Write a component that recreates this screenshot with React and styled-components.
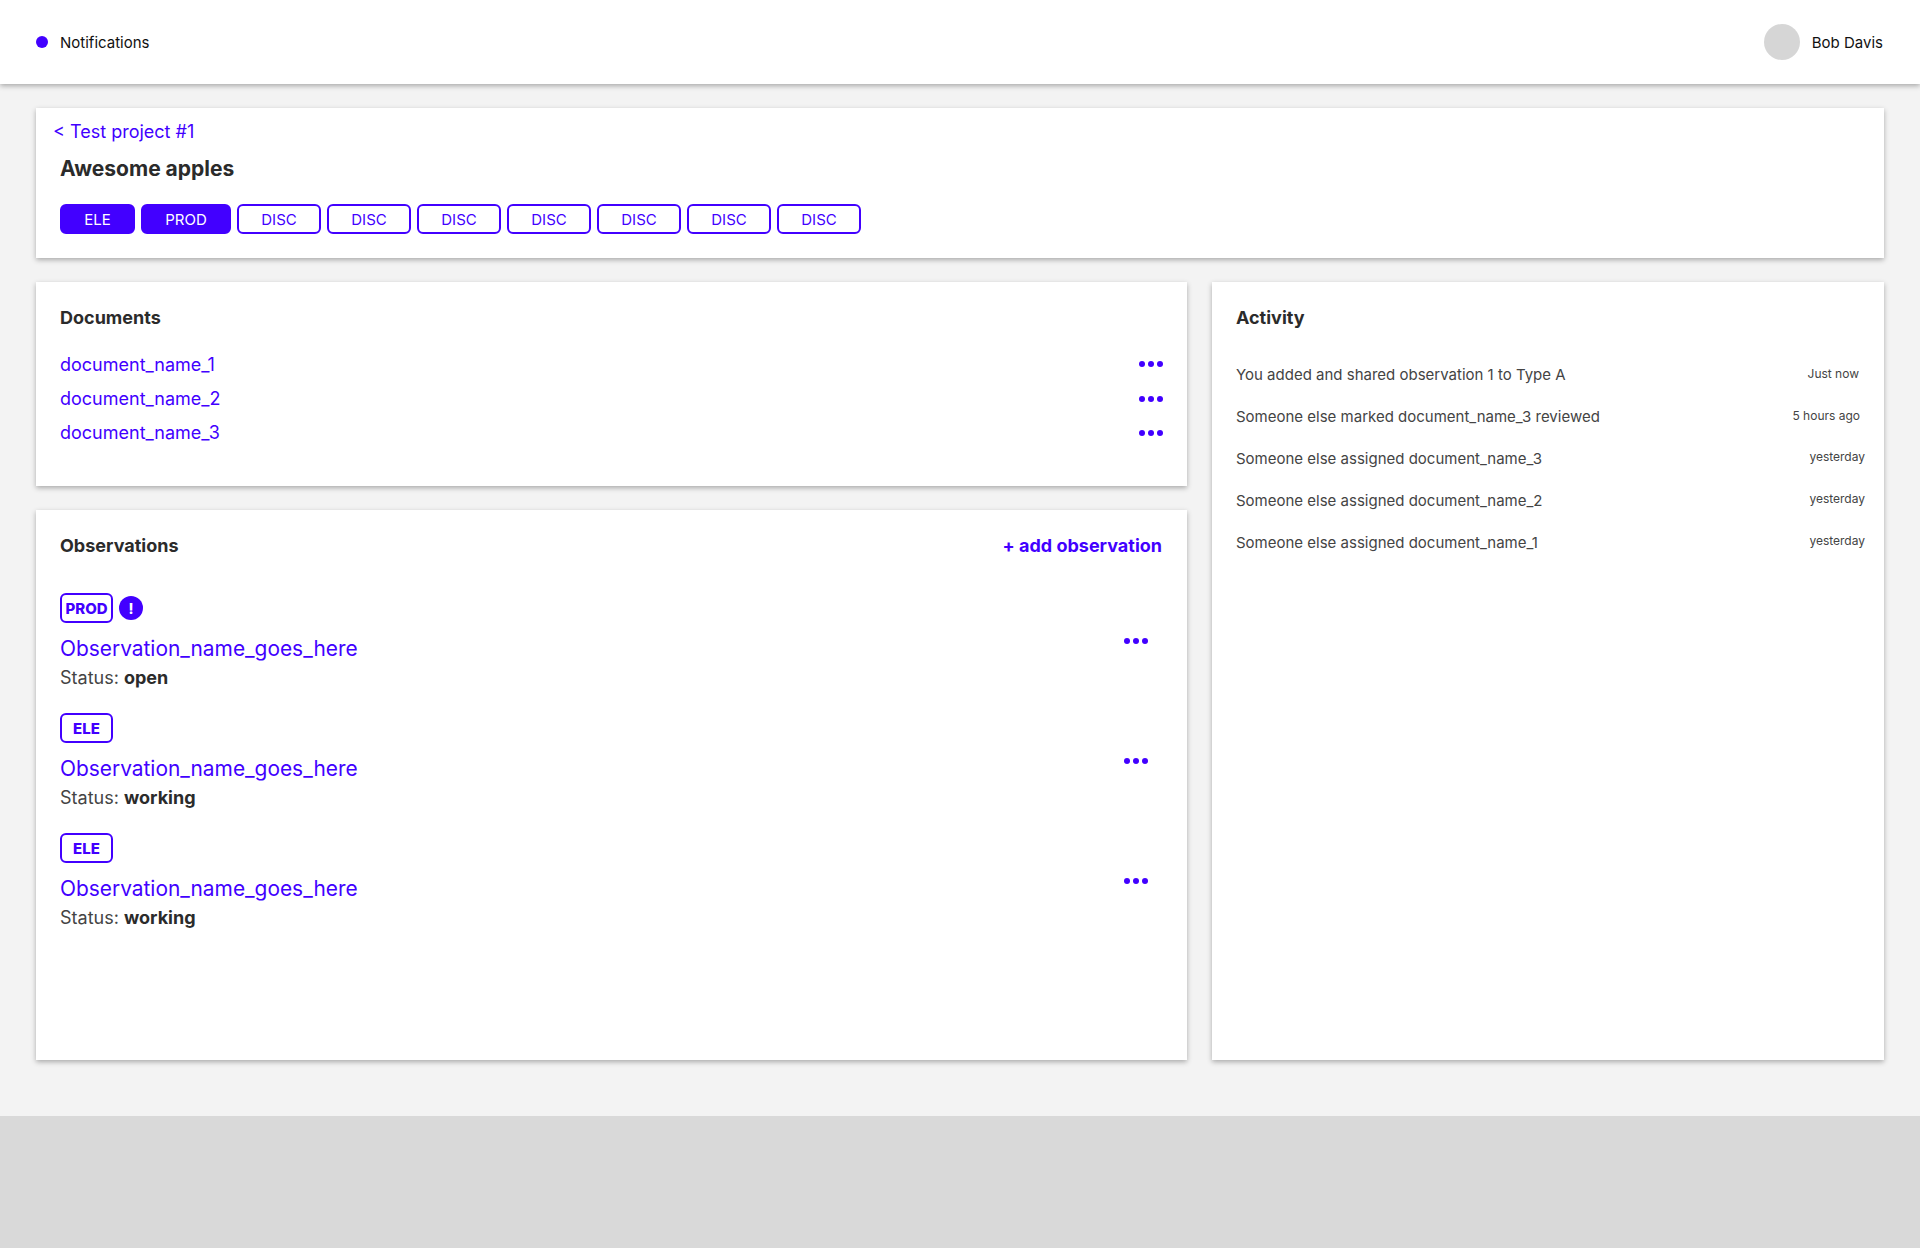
import React from "react"
import styled, { createGlobalStyle } from "styled-components"

const purple = "#4200ff"
const ink = "#2b2b2b"

const disciplines = ["DISC", "DISC", "DISC", "DISC", "DISC", "DISC", "DISC"]
const documents = ["document_name_1", "document_name_2", "document_name_3"]
const observations = [
  { tag: "PROD", status: "open", alert: true },
  { tag: "ELE", status: "working" },
  { tag: "ELE", status: "working" },
]
const activity = [
  { text: "You added and shared observation 1 to Type A", time: "Just now", inset: 6, lift: 2 },
  { text: "Someone else marked document_name_3 reviewed", time: "5 hours ago", inset: 5, lift: 2 },
  { text: "Someone else assigned document_name_3", time: "yesterday", inset: 0, lift: 4 },
  { text: "Someone else assigned document_name_2", time: "yesterday", inset: 0, lift: 4 },
  { text: "Someone else assigned document_name_1", time: "yesterday", inset: 0, lift: 4 },
]

const MoreDots = () => (
  <Dots>
    <Dot />
    <Dot />
    <Dot />
  </Dots>
)

const App = () => {
  return (
    <Page>
      <GlobalStyle />
      <Header>
        <Notifications>
          <NotificationDot />
          Notifications
        </Notifications>
        <User>
          <Avatar />
          Bob Davis
        </User>
      </Header>
      <Main>
        <ProjectCard>
          <BackLink>&lt; Test project #1</BackLink>
          <ProjectTitle>Awesome apples</ProjectTitle>
          <Tabs>
            <Tab $active $width={75}>ELE</Tab>
            <Tab $active $width={90}>PROD</Tab>
            {disciplines.map((name, i) => (
              <Tab key={i} $width={84}>{name}</Tab>
            ))}
          </Tabs>
        </ProjectCard>
        <Columns>
          <LeftColumn>
            <Card>
              <CardTitle>Documents</CardTitle>
              <DocumentList>
                {documents.map((name) => (
                  <DocumentRow key={name}>
                    <DocumentLink>{name}</DocumentLink>
                    <MoreDots />
                  </DocumentRow>
                ))}
              </DocumentList>
            </Card>
            <Card>
              <CardHeader>
                <CardTitle>Observations</CardTitle>
                <AddLink>+ add observation</AddLink>
              </CardHeader>
              <ObservationList>
                {observations.map((item, i) => (
                  <Observation key={i}>
                    <div>
                      <TagRow>
                        <Tag>{item.tag}</Tag>
                        {item.alert && <Alert>!</Alert>}
                      </TagRow>
                      <ObservationName>Observation_name_goes_here</ObservationName>
                      <Status>
                        Status: <strong>{item.status}</strong>
                      </Status>
                    </div>
                    <ObservationMenu>
                      <MoreDots />
                    </ObservationMenu>
                  </Observation>
                ))}
              </ObservationList>
            </Card>
          </LeftColumn>
          <Card>
            <CardTitle>Activity</CardTitle>
            <ActivityList>
              {activity.map((item, i) => (
                <ActivityRow key={i}>
                  <span>{item.text}</span>
                  <ActivityTime $inset={item.inset} $lift={item.lift}>{item.time}</ActivityTime>
                </ActivityRow>
              ))}
            </ActivityList>
          </Card>
        </Columns>
      </Main>
      <Footer />
    </Page>
  )
}

export default App

const GlobalStyle = createGlobalStyle`
  body {
    margin: 0;
    font-family: Inter, "Liberation Sans", sans-serif;
    color: ${ink};
  }
`

const Page = styled.div`
  min-height: 1248px;
  display: flex;
  flex-direction: column;
  background: #f3f3f3;
`

const Header = styled.header`
  position: relative;
  height: 84px;
  padding: 0 37px 0 36px;
  display: flex;
  align-items: center;
  justify-content: space-between;
  background: #fff;
  box-shadow: 0 2px 5px rgba(0, 0, 0, 0.3);
  font-size: 15px;
  color: #111;
`

const Notifications = styled.div`
  display: flex;
  align-items: center;
  gap: 12px;
`

const NotificationDot = styled.span`
  width: 12px;
  height: 12px;
  border-radius: 50%;
  background: ${purple};
`

const User = styled.div`
  display: flex;
  align-items: center;
  gap: 12px;
`

const Avatar = styled.span`
  width: 36px;
  height: 36px;
  border-radius: 50%;
  background: #d6d6d6;
`

const Main = styled.main`
  padding: 24px 36px 56px;
  display: flex;
  flex-direction: column;
  gap: 24px;
`

const Card = styled.section`
  padding: 24px;
  background: #fff;
  box-shadow: 0 2px 5px rgba(0, 0, 0, 0.3);
`

const ProjectCard = styled(Card)`
  height: 150px;
  box-sizing: border-box;
  padding: 12px 24px 0;
`

const BackLink = styled.a`
  display: block;
  margin-left: -7px;
  font-size: 18px;
  line-height: 24px;
  color: ${purple};
`

const ProjectTitle = styled.h1`
  margin: 13px 0 0;
  font-size: 21px;
  line-height: 24px;
  font-weight: 700;
`

const Tabs = styled.div`
  margin-top: 23px;
  display: flex;
  gap: 6px;
`

const Tab = styled.button`
  width: ${(p) => p.$width}px;
  height: 30px;
  padding: 0;
  border: 2px solid ${purple};
  border-radius: 6px;
  background: ${(p) => (p.$active ? purple : "#fff")};
  color: ${(p) => (p.$active ? "#fff" : purple)};
  font-family: inherit;
  font-size: 15px;
`

const Columns = styled.div`
  height: 778px;
  display: grid;
  grid-template-columns: 1151px 672px;
  gap: 25px;
`

const LeftColumn = styled.div`
  display: grid;
  grid-template-rows: 204px 1fr;
  gap: 24px;
`

const CardTitle = styled.h2`
  margin: 0;
  font-size: 18px;
  line-height: 24px;
  font-weight: 700;
`

const CardHeader = styled.div`
  display: flex;
  align-items: center;
  justify-content: space-between;
`

const AddLink = styled.a`
  padding-right: 1px;
  font-size: 18px;
  line-height: 24px;
  font-weight: 700;
  color: ${purple};
`

const DocumentList = styled.div`
  margin-top: 17px;
`

const DocumentRow = styled.div`
  height: 34.4px;
  display: flex;
  align-items: center;
  justify-content: space-between;
`

const DocumentLink = styled.a`
  font-size: 18px;
  color: ${purple};
`

const Dots = styled.div`
  display: flex;
  gap: 3px;
`

const Dot = styled.span`
  width: 6px;
  height: 6px;
  border-radius: 50%;
  background: ${purple};
`

const ObservationList = styled.div`
  margin-top: 35px;
  display: flex;
  flex-direction: column;
  gap: 21px;
`

const Observation = styled.article`
  display: flex;
  justify-content: space-between;
  padding-right: 15px;
`

const ObservationMenu = styled.div`
  margin-top: 45px;
`

const TagRow = styled.div`
  display: flex;
  align-items: center;
  gap: 6px;
`

const Tag = styled.span`
  box-sizing: border-box;
  width: 53px;
  height: 30px;
  display: flex;
  align-items: center;
  justify-content: center;
  border: 2px solid ${purple};
  border-radius: 6px;
  color: ${purple};
  font-size: 15px;
  font-weight: 800;
`

const Alert = styled.span`
  width: 24px;
  height: 24px;
  display: flex;
  align-items: center;
  justify-content: center;
  border-radius: 50%;
  background: ${purple};
  color: #fff;
  font-size: 14px;
  font-weight: 800;
`

const ObservationName = styled.a`
  display: block;
  margin-top: 11px;
  font-size: 20.9px;
  line-height: 30px;
  color: ${purple};
`

const Status = styled.div`
  font-size: 18px;
  line-height: 28px;
  color: #444;
  strong {
    font-weight: 700;
    color: ${ink};
  }
`

const ActivityList = styled.div`
  margin-top: 23px;
`

const ActivityRow = styled.div`
  height: 42px;
  margin-right: -5px;
  display: flex;
  align-items: center;
  justify-content: space-between;
  font-size: 15px;
  color: #444;
`

const ActivityTime = styled.span`
  padding-right: ${(p) => p.$inset}px;
  margin-top: -${(p) => p.$lift}px;
  font-size: 12px;
`

const Footer = styled.footer`
  flex: 1;
  background: #d9d9d9;
`
